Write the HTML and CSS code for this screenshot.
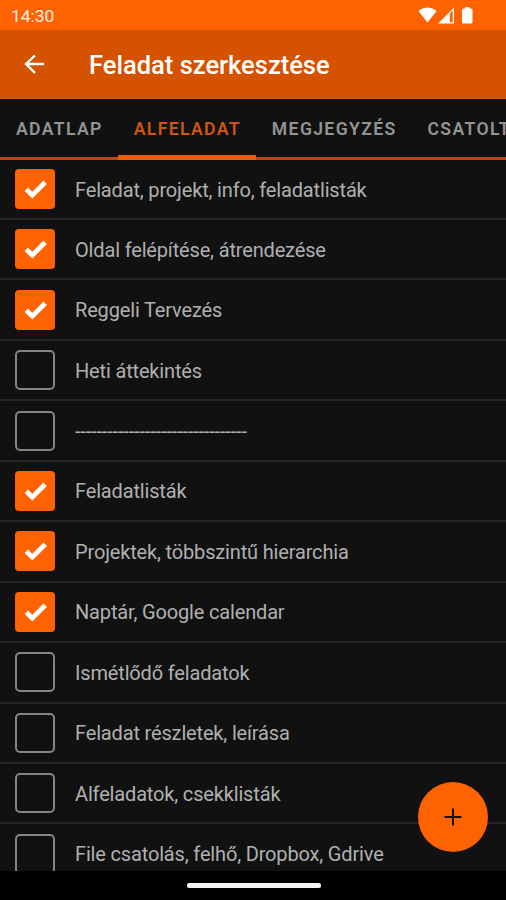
FILE: index.html
```html
<!DOCTYPE html>
<html lang="hu">
<head>
  <meta charset="UTF-8" />
  <title>Feladat szerkesztése</title>
  <link rel="stylesheet" href="styles.css">
</head>
<body>
  <svg width="0" height="0" class="symbols">
    <symbol id="check" viewBox="0 0 40 40"><path d="M11.3 20.3 L17.3 26.2 L30.2 13.2" fill="none" stroke="#fff" stroke-width="4.8" /></symbol>
  </svg>

  <div class="status-bar">
    <span class="time">14:30</span>
    <svg class="status-icons" width="56" height="18" viewBox="0 0 56 18" fill="#fff">
      <path d="M0.5 4 C5.5 -0.7 13.5 -0.7 18.5 4 L9.5 15.5 Z" />
      <path d="M20 16.5 L36 0.5 V16.5 Z M31.8 6.5 V15.2 H34.7 V3.6 Z" fill-rule="evenodd" />
      <path d="M47 0 H51.5 V1.5 H53 Q54.5 1.5 54.5 3 V15 Q54.5 16.5 53 16.5 H45.5 Q44 16.5 44 15 V3 Q44 1.5 45.5 1.5 H47 Z" />
    </svg>
  </div>

  <header class="app-bar">
    <svg class="back" width="22" height="20" viewBox="0 0 22 20" fill="none" stroke="#fff" stroke-width="2.4">
      <path d="M20 9 H2 M11 0.5 L2 9 L11 17.8" />
    </svg>
    <h1>Feladat szerkesztése</h1>
  </header>

  <nav class="tabs">
    <a class="tab">ADATLAP</a>
    <a class="tab active">ALFELADAT</a>
    <a class="tab">MEGJEGYZÉS</a>
    <a class="tab">CSATOLT</a>
  </nav>

  <ul class="list">
    <li><span class="box checked"><svg><use href="#check" /></svg></span><span class="label">Feladat, projekt, info, feladatlisták</span></li>
    <li><span class="box checked"><svg><use href="#check" /></svg></span><span class="label">Oldal felépítése, átrendezése</span></li>
    <li><span class="box checked"><svg><use href="#check" /></svg></span><span class="label">Reggeli Tervezés</span></li>
    <li><span class="box"></span><span class="label">Heti áttekintés</span></li>
    <li><span class="box"></span><span class="label">--------------------------------</span></li>
    <li><span class="box checked"><svg><use href="#check" /></svg></span><span class="label">Feladatlisták</span></li>
    <li><span class="box checked"><svg><use href="#check" /></svg></span><span class="label">Projektek, többszintű hierarchia</span></li>
    <li><span class="box checked"><svg><use href="#check" /></svg></span><span class="label">Naptár, Google calendar</span></li>
    <li><span class="box"></span><span class="label">Ismétlődő feladatok</span></li>
    <li><span class="box"></span><span class="label">Feladat részletek, leírása</span></li>
    <li><span class="box"></span><span class="label">Alfeladatok, csekklisták</span></li>
    <li><span class="box"></span><span class="label">File csatolás, felhő, Dropbox, Gdrive</span></li>
  </ul>

  <div class="nav-bar"><span class="handle"></span></div>

  <div class="fab">
    <svg width="18" height="18" viewBox="0 0 18 18" stroke="#1a0d00" stroke-width="2"><path d="M0.5 9 H17.5 M9 0.5 V17.5" /></svg>
  </div>
</body>
</html>
```
FILE: styles.css
```css
* {
  box-sizing: border-box;
}

body {
  margin: 0;
  height: 900px;
  display: flex;
  flex-direction: column;
  overflow: hidden;
  background: #111;
  font-family: Roboto, sans-serif;
}

.symbols {
  position: absolute;
}

.status-bar {
  flex: none;
  height: 30px;
  padding: 1px 32px 0 11px;
  display: flex;
  align-items: center;
  justify-content: space-between;
  background: #ff6200;
  color: #ffefe5;
}

.time {
  font-size: 17.4px;
  line-height: 30px;
}

.app-bar {
  flex: none;
  height: 69px;
  padding: 0 24px;
  display: flex;
  align-items: center;
  background: #d45200;
  color: #fff;
}

.app-bar h1 {
  margin: 1px 0 0 43px;
  font-size: 25.5px;
  font-weight: 500;
  white-space: nowrap;
}

.tabs {
  flex: none;
  height: 61px;
  display: flex;
  background: linear-gradient(#b84c10, #b84c10) 0 58px / 100% 3px no-repeat #111;
}

.tab {
  flex: none;
  padding: 0 15px 0 16px;
  height: 61px;
  line-height: 61px;
  font-size: 17.6px;
  font-weight: 600;
  letter-spacing: 1.35px;
  color: #949494;
}

.tab.active {
  color: #d0560e;
  border-bottom: 5px solid #ee5f05;
}

.list {
  flex: 1;
  min-height: 0;
  margin: 0;
  padding: 0;
  overflow: hidden;
  list-style: none;
}

.list li {
  height: 60.45px;
  padding: 0 15px;
  display: flex;
  align-items: center;
  border-bottom: 2px solid #262626;
}

/* first row starts right under the tab line */
.list li:first-child {
  height: 60px;
}

.box {
  flex: none;
  width: 40px;
  height: 40px;
  border: 2px solid #858585;
  border-radius: 5px;
}

.box.checked {
  border: 0;
  border-radius: 4px;
  background: #ff6200;
}

.box svg {
  display: block;
  width: 40px;
  height: 40px;
}

.label {
  margin: 1px 0 0 20px;
  font-size: 20px;
  letter-spacing: -0.16px;
  color: #b0b0b0;
  white-space: nowrap;
}

.nav-bar {
  flex: none;
  height: 29px;
  display: flex;
  justify-content: center;
  padding: 12px 0 0 1px;
  background: #000;
}

.handle {
  width: 134px;
  height: 5px;
  border-radius: 2px;
  background: #f4f4f4;
}

.fab {
  position: absolute;
  right: 18px;
  bottom: 48px;
  width: 70px;
  height: 70px;
  display: flex;
  align-items: center;
  justify-content: center;
  border-radius: 50%;
  background: #ff6200;
}
```
